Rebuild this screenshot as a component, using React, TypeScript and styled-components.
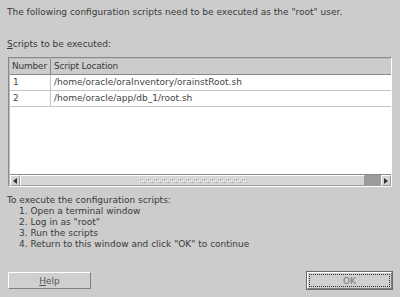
import { createGlobalStyle } from "styled-components";
import styled from "styled-components";

const GlobalStyle = createGlobalStyle`
  html, body {
    margin: 0;
    padding: 0;
    background: #cccccc;
  }
`;

const Page = styled.div`
  width: 400px;
  height: 297px;
  box-sizing: border-box;
  padding: 7px 8px 0 7px;
  background: #cccccc;
  color: #3a3a3a;
  font-family: "DejaVu Sans", sans-serif;
  font-size: 9px;
  overflow: hidden;
  display: flex;
  flex-direction: column;
`;

const Line = styled.div<{ $top?: number; $indent?: number }>`
  margin-top: ${(p) => p.$top ?? 0}px;
  padding-left: ${(p) => p.$indent ?? 0}px;
  line-height: 11px;
  white-space: nowrap;
`;

const Mnemonic = styled.span`
  text-decoration: underline;
`;

const Frame = styled.div`
  margin-top: 7px;
  margin-left: 1px;
  height: 130px;
  box-sizing: border-box;
  border-top: 1px solid #8a8a8a;
  border-left: 1px solid #8a8a8a;
  border-right: 1px solid #ffffff;
  border-bottom: 1px solid #ffffff;
  display: flex;
  flex-direction: column;
`;

const Inner = styled.div`
  flex: 1;
  display: flex;
  flex-direction: column;
  border-top: 1px solid #bdbdbd;
  border-left: 1px solid #bdbdbd;
  background: #ffffff;
`;

const Row = styled.div<{ $head?: boolean }>`
  display: grid;
  grid-template-columns: 41px 1fr;
  height: 15px;
  line-height: 15px;
  background: ${(p) => (p.$head ? "#cccccc" : "#ffffff")};
  border-bottom: 1px solid ${(p) => (p.$head ? "#8a8a8a" : "#c4c4c4")};
`;

const Cell = styled.div<{ $head?: boolean }>`
  padding-left: ${(p) => (p.$head ? 2 : 3)}px;
  border-right: 1px solid ${(p) => (p.$head ? "#8a8a8a" : "#c4c4c4")};
  overflow: hidden;
  white-space: nowrap;
  letter-spacing: ${(p) => (p.$head ? "-0.2px" : "0")};
  color: ${(p) => (p.$head ? "#3a3a3a" : "#444444")};
  &:last-child {
    border-right: none;
    padding-left: 3px;
  }
`;

const Filler = styled.div`
  flex: 1;
`;

const ScrollBar = styled.div`
  height: 11px;
  display: flex;
  background: #cccccc;
  border-top: 1px solid #8a8a8a;
`;

const Arrow = styled.div`
  width: 10px;
  display: flex;
  align-items: center;
  justify-content: center;
  background: #d4d4d4;
  border-top: 1px solid #ffffff;
  border-left: 1px solid #ffffff;
  border-right: 1px solid #9a9a9a;
  border-bottom: 1px solid #9a9a9a;
  box-sizing: border-box;
`;

const Thumb = styled.div`
  flex: 1;
  display: flex;
  align-items: center;
  justify-content: center;
  background: #d6d6d6;
  border-top: 1px solid #ffffff;
  border-left: 1px solid #ffffff;
  border-right: 1px solid #9a9a9a;
  border-bottom: 1px solid #9a9a9a;
  box-sizing: border-box;
`;

const Track = styled.div`
  width: 16px;
  background: #9b9b9b;
`;

const Instructions = styled.div`
  margin-top: 8px;
`;

const ButtonBar = styled.div`
  margin-top: auto;
  margin-bottom: 8px;
  padding-left: 1px;
  display: flex;
  justify-content: space-between;
`;

const Button = styled.div<{ $default?: boolean }>`
  width: ${(p) => (p.$default ? 85 : 83)}px;
  height: 17px;
  box-sizing: border-box;
  background: #cfcfcf;
  border-top: 1px solid #ffffff;
  border-left: 1px solid #ffffff;
  border-right: 1px solid #7f7f7f;
  border-bottom: 1px solid #7f7f7f;
  outline: ${(p) => (p.$default ? "1px solid #6a6a6a" : "none")};
  display: flex;
  align-items: center;
  justify-content: center;
  color: #555555;
  padding: 1px;
`;

const Focus = styled.div`
  flex: 1;
  align-self: stretch;
  border: 1px dotted #333333;
  display: flex;
  align-items: center;
  justify-content: center;
  color: #777777;
`;

function Tri({ dir }: { dir: "left" | "right" }) {
  return (
    <svg width="4" height="6" viewBox="0 0 4 6">
      {dir === "left" ? (
        <polygon points="4,0 4,6 0,3" fill="#333" />
      ) : (
        <polygon points="0,0 0,6 4,3" fill="#333" />
      )}
    </svg>
  );
}

// dotted grip drawn on the scrollbar thumb
function Grip() {
  const dots = [];
  for (let i = 0; i < 27; i++) {
    const x = i * 4;
    const y = i % 2 === 0 ? 1 : 4;
    dots.push(<rect key={`w${i}`} x={x} y={y} width="1" height="1" fill="#ffffff" />);
    dots.push(<rect key={`g${i}`} x={x + 1} y={y + 1} width="1" height="1" fill="#9a9a9a" />);
    const y2 = i % 2 === 0 ? 4 : 1;
    dots.push(<rect key={`v${i}`} x={x + 2} y={y2} width="1" height="1" fill="#ffffff" />);
    dots.push(<rect key={`h${i}`} x={x + 3} y={y2 + 1} width="1" height="1" fill="#9a9a9a" />);
  }
  return (
    <svg width="108" height="7" viewBox="0 0 108 7" shapeRendering="crispEdges">
      {dots}
    </svg>
  );
}

const scripts = [
  "/home/oracle/oraInventory/orainstRoot.sh",
  "/home/oracle/app/db_1/root.sh",
];

const steps = [
  "Open a terminal window",
  'Log in as "root"',
  "Run the scripts",
  'Return to this window and click "OK" to continue',
];

export default function App() {
  return (
    <Page>
      <GlobalStyle />
      <Line>The following configuration scripts need to be executed as the "root" user.</Line>
      <Line $top={21}>
        <Mnemonic>S</Mnemonic>cripts to be executed:
      </Line>
      <Frame>
        <Inner>
          <Row $head>
            <Cell $head>Number</Cell>
            <Cell $head>Script Location</Cell>
          </Row>
          {scripts.map((s, i) => (
            <Row key={s}>
              <Cell>{i + 1}</Cell>
              <Cell>{s}</Cell>
            </Row>
          ))}
          <Filler />
          <ScrollBar>
            <Arrow>
              <Tri dir="left" />
            </Arrow>
            <Thumb>
              <Grip />
            </Thumb>
            <Track />
            <Arrow>
              <Tri dir="right" />
            </Arrow>
          </ScrollBar>
        </Inner>
      </Frame>
      <Instructions>
        <Line>To execute the configuration scripts:</Line>
        {steps.map((s, i) => (
          <Line key={s} $indent={12}>
            {i + 1}. {s}
          </Line>
        ))}
      </Instructions>
      <ButtonBar>
        <Button>
          <Mnemonic>H</Mnemonic>elp
        </Button>
        <Button $default>
          <Focus>OK</Focus>
        </Button>
      </ButtonBar>
    </Page>
  );
}
